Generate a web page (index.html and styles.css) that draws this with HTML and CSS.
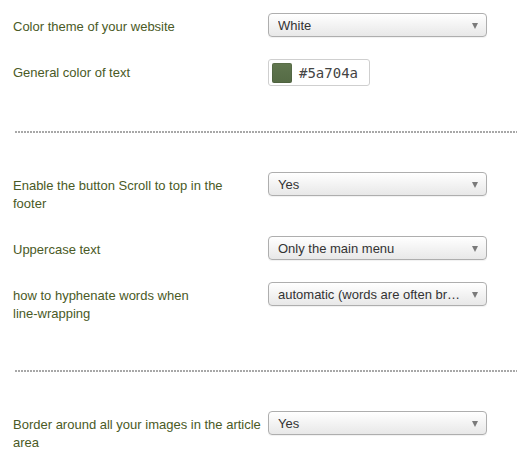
FILE: index.html
```html
<!DOCTYPE html>
<html>
<head>
<meta charset="utf-8">
<link rel="stylesheet" href="styles.css">
</head>
<body>
<div class="page">
  <div class="row">
    <div class="label">Color theme of your website</div>
    <div class="select"><span class="value">White</span><span class="arrow"></span></div>
  </div>
  <div class="row">
    <div class="label">General color of text</div>
    <div class="color-input"><span class="swatch"></span><span class="hex">#5a704a</span></div>
  </div>
  <div class="sep"></div>
  <div class="row">
    <div class="label">Enable the button Scroll to top in the<br>footer</div>
    <div class="select"><span class="value">Yes</span><span class="arrow"></span></div>
  </div>
  <div class="row">
    <div class="label">Uppercase text</div>
    <div class="select"><span class="value">Only the main menu</span><span class="arrow"></span></div>
  </div>
  <div class="row">
    <div class="label">how to hyphenate words when<br>line-wrapping</div>
    <div class="select"><span class="value">automatic (words are often broken)</span><span class="arrow"></span></div>
  </div>
  <div class="sep"></div>
  <div class="row">
    <div class="label">Border around all your images in the article<br>area</div>
    <div class="select"><span class="value">Yes</span><span class="arrow"></span></div>
  </div>
</div>
</body>
</html>
```
FILE: styles.css
```css
html, body {
  margin: 0;
  padding: 0;
  background: #fff;
}
body {
  font-family: "Liberation Sans", Arial, Helvetica, sans-serif;
  font-size: 13px;
  color: #4a5a26;
}
.page {
  padding: 13px 2px 0 13px;
  display: flex;
  flex-direction: column;
  gap: 21px;
}
.row {
  display: grid;
  grid-template-columns: 255px 219px;
  align-items: start;
}
.label {
  line-height: 18px;
  padding: 5px 0 2px 0;
  white-space: nowrap;
}
.select {
  box-sizing: border-box;
  height: 24px;
  border: 1px solid #aeaeae;
  border-radius: 4px;
  background: linear-gradient(#ffffff, #f1f1f1 60%, #e8e8e8);
  box-shadow: 0 1px 1px rgba(0,0,0,0.06);
  display: flex;
  align-items: center;
  padding: 0 8px 0 9px;
  color: #333;
  font-size: 13px;
}
.value {
  flex: 1;
  white-space: nowrap;
  overflow: hidden;
  text-overflow: ellipsis;
  padding-right: 10px;
}
.arrow {
  width: 0;
  height: 0;
  border-left: 3.5px solid transparent;
  border-right: 3.5px solid transparent;
  border-top: 6px solid #7a7a7a;
  margin-top: 1px;
}
.color-input {
  box-sizing: border-box;
  width: 102px;
  height: 27px;
  border: 1px solid #cfcfcf;
  border-radius: 3px;
  display: flex;
  align-items: center;
  padding-left: 3px;
  gap: 7px;
}
.swatch {
  width: 20px;
  height: 20px;
  border-radius: 2px;
  background: linear-gradient(#62784f, #5a704a 50%, #556b45);
  box-shadow: inset 0 0 0 1px rgba(0,0,0,0.08);
}
.hex {
  font-family: "DejaVu Sans Mono", "Liberation Mono", monospace;
  font-size: 14px;
  color: #444;
}
.sep {
  height: 2px;
  margin: 24px 0 18px 2px;
  background-image: linear-gradient(to right, #a8a8a8 2px, transparent 2px);
  background-size: 3px 2px;
  background-repeat: repeat-x;
}
```
